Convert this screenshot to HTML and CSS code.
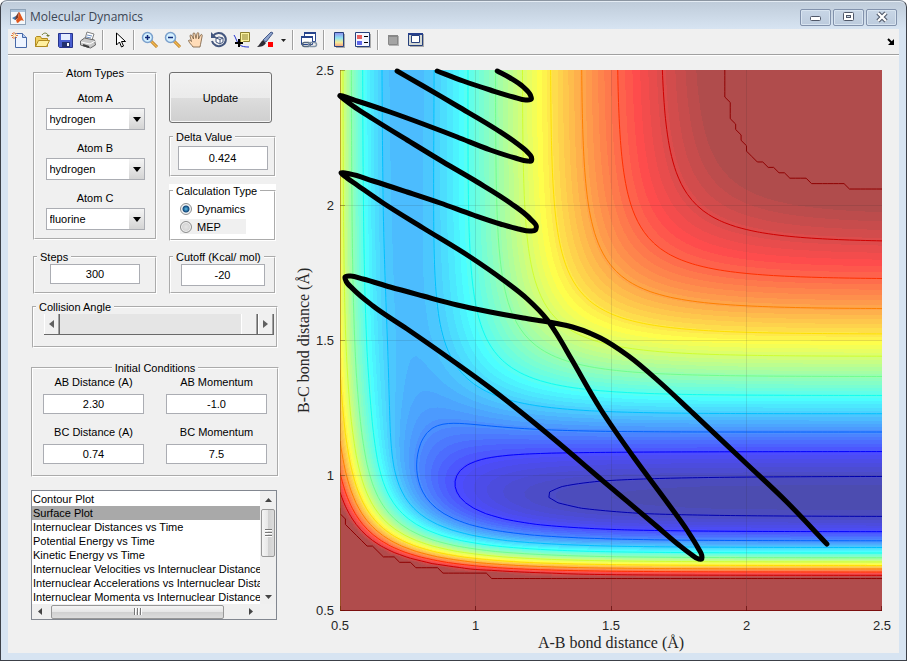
FILE: index.html
```
<!DOCTYPE html>
<html lang="en">
<head>
  <meta charset="UTF-8">
  <meta name="viewport" content="width=device-width, initial-scale=1.0">
  <title>Molecular Dynamics</title>
  <link rel="stylesheet" href="styles.css">
</head>
<body>
  <div class="window">
    <!-- Title bar -->
    <header class="titlebar">
      <svg class="logo" width="16" height="16" viewBox="0 0 16 16">
        <rect x=".5" y=".5" width="15" height="15" fill="#f4f7fa" stroke="#8fa3b8"/>
        <path d="M1 1h14v2H1z" fill="#a9c3dd"/>
        <path d="M2 9l4-2 2 2-3 2z" fill="#3c78b4"/>
        <path d="M6 7c1-1 2-4 3-4l-1 6-3 2z" fill="#7a3a2a"/>
        <path d="M9 3c1 0 3 6 5 9-2-1-3-1-4 0s-2 2-3 2l-1-3 2-2z" fill="#e0561c"/>
      </svg>
      <h1>Molecular Dynamics</h1>
      <div class="window-buttons">
        <button type="button" aria-label="Minimize">
          <svg width="14" height="12" viewBox="0 0 14 12"><rect x="1.500" y="5.500" width="10" height="4" rx="1" fill="#fff" stroke="#4f5768"/></svg>
        </button>
        <button type="button" aria-label="Maximize">
          <svg width="14" height="12" viewBox="0 0 14 12"><rect x="1.500" y="1.500" width="10" height="8" rx="1" fill="#fff" stroke="#4f5768"/><rect x="4.500" y="4.500" width="4" height="2" fill="#c8d5e4" stroke="#4f5768"/></svg>
        </button>
        <button type="button" aria-label="Close">
          <svg width="14" height="12" viewBox="0 0 14 12"><path d="M3 2l8 8M11 2l-8 8" stroke="#4f5768" stroke-width="4.500"/><path d="M3 2l8 8M11 2l-8 8" stroke="#fff" stroke-width="2.300"/></svg>
        </button>
      </div>
    </header>

    <div class="content">
      <!-- Figure toolbar -->
      <nav class="toolbar">
        <button type="button" aria-label="New">
          <svg viewBox="0 0 18 18"><path d="M5.500 2.500h7l4 4v10h-11z" fill="#eef4ff" stroke="#4668a8"/><path d="M12.500 2.500v4h4" fill="#b8cdf0" stroke="#4668a8"/><path d="M4 1v7M1 4.500h7M2 2l5 5M7 2L2 7" stroke="#e07840"/><circle cx="4.500" cy="4.500" r="1.500" fill="#fff3c0"/></svg>
        </button>
        <button type="button" aria-label="Open">
          <svg viewBox="0 0 18 18"><path d="M2.500 15.500v-9l1-1h4l1 2h6v8z" fill="#f0d060" stroke="#b08a20"/><path d="M2.500 15.500l3-6h11l-3 6z" fill="#fff0a0" stroke="#b08a20"/><path d="M9 4c2-3 5-2 6 0" fill="none" stroke="#6f7b35"/><path d="M13 4h4l-2 2z" fill="#6f7b35"/></svg>
        </button>
        <button type="button" aria-label="Save">
          <svg viewBox="0 0 18 18"><path d="M2.500 2.500h14v14h-13l-1-1z" fill="#4a5fd0" stroke="#27348c"/><path d="M5 3h9v6H5z" fill="#e4ecff"/><path d="M6 11h8v5H6z" fill="#22306e"/><path d="M11 12h2v3h-2z" fill="#fff"/></svg>
        </button>
        <button type="button" aria-label="Print">
          <svg viewBox="0 0 18 18"><path d="M6 8l2-7 7 2-2 6z" fill="#fff" stroke="#808080"/><path d="M8 4l5 1M7 6l5 1" stroke="#7090c0"/><path d="M1.500 10l4-3 10 2 1 5-5 3-10-3z" fill="#c8c8c8" stroke="#686868"/><path d="M2 11l9 2 5-3" fill="none" stroke="#fff"/><path d="M4 14l6 2" stroke="#404040" stroke-width="2"/></svg>
        </button>
        <span class="sep"></span>
        <button type="button" aria-label="Edit plot">
          <svg viewBox="0 0 18 18"><path d="M6.500 2v12l3-3 2 5 2-1-2-4.500h4z" fill="#fff" stroke="#000"/></svg>
        </button>
        <span class="sep"></span>
        <button type="button" aria-label="Zoom in">
          <svg viewBox="0 0 18 18"><path d="M10 10l6 6" stroke="#b87820" stroke-width="3"/><path d="M10 10l6 6" stroke="#f0b850" stroke-width="1.500"/><circle cx="6.500" cy="6.500" r="5" fill="#d4f0ff" stroke="#7ba0cc" stroke-width="1.500"/><path d="M6.500 4v5M4 6.500h5" stroke="#102878" stroke-width="1.500"/></svg>
        </button>
        <button type="button" aria-label="Zoom out">
          <svg viewBox="0 0 18 18"><path d="M10 10l6 6" stroke="#b87820" stroke-width="3"/><path d="M10 10l6 6" stroke="#f0b850" stroke-width="1.500"/><circle cx="6.500" cy="6.500" r="5" fill="#d4f0ff" stroke="#7ba0cc" stroke-width="1.500"/><path d="M4 6.500h5" stroke="#102878" stroke-width="1.500"/></svg>
        </button>
        <button type="button" aria-label="Pan">
          <svg viewBox="0 0 18 18"><path d="M6 16c-1-2-4-4-4.500-6.500 1-1 2 0 3 1L3 5c0-1.500 1.500-1.500 2 0l1.500 3L6 3c0-1.500 1.800-1.500 2 0l1 4.500L10 2.500c.3-1.400 2-1 1.800.3L11.500 8l2-4c.7-1.200 2-.4 1.700.8L14 11c0 2-1 3-1 5z" fill="#ffdcb8" stroke="#74593c" stroke-width=".8"/></svg>
        </button>
        <button type="button" aria-label="Rotate 3D">
          <svg viewBox="0 0 18 18"><path d="M3 5a7 6.500 0 1 1-1 5" fill="none" stroke="#43567e" stroke-width="2"/><path d="M1 1v6h6z" fill="#43567e"/><path d="M6 7l3-1 4 1v4l-3 2-4-2zM6 7l4 1.500L13 7M10 8.500V13" fill="#fff" stroke="#43567e"/></svg>
        </button>
        <button type="button" aria-label="Data cursor">
          <svg viewBox="0 0 18 18"><path d="M1 4c2 3 2 5 4 8s5 4 11 4" fill="none" stroke="#2030d0"/><path d="M7.500 1.500h9v9h-6l-3 3z" fill="#fbf3a0" stroke="#8c8030"/><path d="M9 4h6M9 6h6M9 8h6" stroke="#8c8030"/><path d="M6 8v8M2 12h8" stroke="#000" stroke-width="2"/></svg>
        </button>
        <button type="button" aria-label="Brush">
          <svg viewBox="0 0 18 18"><path d="M7 9l8-8 2 1-7 9z" fill="#8ea4cc" stroke="#465a8a"/><path d="M7 9l3 3c-2 3-5 4-9 4 3-2 3-5 6-7z" fill="#2c2c34"/><path d="M12 11h5v5h-5z" fill="#f00"/></svg>
        </button>
        <button type="button" class="narrow" aria-label="Brush colour">
          <svg viewBox="0 0 8 18"><path d="M2 8h5L4.500 11z" fill="#222"/></svg>
        </button>
        <span class="sep"></span>
        <button type="button" aria-label="Link plot">
          <svg viewBox="0 0 18 18"><path d="M4.500 1.500h11v9h-11z" fill="#fff" stroke="#27448c"/><path d="M4 1h12v2H4z" fill="#27448c"/><path d="M1.500 5.500h11v8h-11z" fill="#fff" stroke="#27448c"/><path d="M1 5h12v2H1z" fill="#27448c"/><rect x="2.500" y="11.500" width="8" height="4" rx="2" fill="none" stroke="#55687c" stroke-width="1.500"/><rect x="8.500" y="11.500" width="8" height="4" rx="2" fill="none" stroke="#8294a8" stroke-width="1.500"/></svg>
        </button>
        <span class="sep"></span>
        <button type="button" aria-label="Insert colorbar">
          <svg viewBox="0 0 18 18"><defs><linearGradient id="bar" x2="0" y2="1"><stop offset="0" stop-color="#8c8cf0"/><stop offset=".4" stop-color="#90e4f0"/><stop offset=".7" stop-color="#f4ec98"/><stop offset="1" stop-color="#f49c84"/></linearGradient></defs><path d="M5 3h9v14H5z" fill="#aaa"/><path d="M3.500 1.500h9v14h-9z" fill="url(#bar)" stroke="#27407c"/></svg>
        </button>
        <button type="button" aria-label="Insert legend">
          <svg viewBox="0 0 18 18"><path d="M3 3h14v14H3z" fill="#aaa"/><path d="M1.500 1.500h14v14h-14z" fill="#f4f6ff" stroke="#27407c"/><path d="M3 4h5v4H3z" fill="#e86060"/><path d="M3 10h5v4H3z" fill="#6068e8"/><path d="M10 5.500h4M10 11.500h4" stroke="#000"/></svg>
        </button>
        <span class="sep"></span>
        <button type="button" aria-label="Hide plot tools">
          <svg viewBox="0 0 18 18"><path d="M4 5h10v10H4z" fill="#b4b4b4"/><path d="M3.500 4.500h9v9h-9z" fill="#a4a4a4" stroke="#888"/><path d="M3 4h10v2H3z" fill="#888"/></svg>
        </button>
        <button type="button" aria-label="Show plot tools">
          <svg viewBox="0 0 18 18"><path d="M2 3h14v13H2z" fill="#aaa"/><path d="M.5 2.500h14v12H.5z" fill="#d4d8d4" stroke="#27407c"/><path d="M0 2h15v2H0z" fill="#27408c"/><path d="M3.500 4.500h8v7h-8z" fill="#fff" stroke="#27407c"/></svg>
        </button>
        <button type="button" class="dock narrow" aria-label="Dock figure">
          <svg viewBox="0 0 8 18"><path d="M1 8l4 4" stroke="#000" stroke-width="2"/><path d="M7 8v6H1z" fill="#000"/></svg>
        </button>
      </nav>

      <main class="main">
        <form class="controls">
          <div class="columns">
            <div class="column left">
              <fieldset class="atoms">
                <legend>Atom Types</legend>
                <label for="atomA">Atom A</label>
                <div class="dropdown">
                  <select id="atomA"><option>hydrogen</option><option>fluorine</option></select>
                </div>
                <label for="atomB">Atom B</label>
                <div class="dropdown">
                  <select id="atomB"><option>hydrogen</option><option>fluorine</option></select>
                </div>
                <label for="atomC">Atom C</label>
                <div class="dropdown">
                  <select id="atomC"><option>fluorine</option><option>hydrogen</option></select>
                </div>
              </fieldset>
              <fieldset class="single">
                <legend><label for="steps">Steps</label></legend>
                <input type="text" id="steps" value="300">
              </fieldset>
            </div>
            <div class="column right">
              <button type="button" class="update">Update</button>
              <fieldset class="single delta">
                <legend><label for="delta">Delta Value</label></legend>
                <input type="text" id="delta" value="0.424">
              </fieldset>
              <div class="calc">
                <fieldset>
                  <legend>Calculation Type</legend>
                  <label><input type="radio" name="calc" checked>Dynamics</label>
                  <label class="grey"><input type="radio" name="calc">MEP</label>
                </fieldset>
              </div>
              <fieldset class="single cutoff">
                <legend><label for="cutoff">Cutoff (Kcal/ mol)</label></legend>
                <input type="text" id="cutoff" value="-20">
              </fieldset>
            </div>
          </div>

          <fieldset class="angle">
            <legend><label for="angle">Collision Angle</label></legend>
            <div class="slider">
              <button type="button" aria-label="Decrease angle"><svg width="5" height="8" viewBox="0 0 5 8"><path d="M5 0v8L0 4z" fill="#606060"/></svg></button>
              <input type="range" id="angle" min="0" max="180" value="180">
              <button type="button" aria-label="Increase angle"><svg width="5" height="8" viewBox="0 0 5 8"><path d="M0 0v8l5-4z" fill="#606060"/></svg></button>
            </div>
          </fieldset>

          <fieldset class="initial">
            <legend>Initial Conditions</legend>
            <div class="fields">
              <label>AB Distance (A)<input type="text" value="2.30"></label>
              <label>AB Momentum<input type="text" value="-1.0"></label>
              <label>BC Distance (A)<input type="text" value="0.74"></label>
              <label>BC Momentum<input type="text" value="7.5"></label>
            </div>
          </fieldset>

          <div class="plot-list">
            <select size="8" aria-label="Plot type">
              <option>Contour Plot</option>
              <option selected>Surface Plot</option>
              <option>Internuclear Distances vs Time</option>
              <option>Potential Energy vs Time</option>
              <option>Kinetic Energy vs Time</option>
              <option>Internuclear Velocities vs Internuclear Distance</option>
              <option>Internuclear Accelerations vs Internuclear Distance</option>
              <option>Internuclear Momenta vs Internuclear Distance</option>
            </select>
            <div class="vbar">
              <svg width="7" height="4" viewBox="0 0 7 4"><path d="M0 4h7L3.500 0z" fill="#444"/></svg>
              <div class="thumb"><i></i><i></i><i></i></div>
              <svg class="end" width="7" height="4" viewBox="0 0 7 4"><path d="M0 0h7L3.500 4z" fill="#444"/></svg>
            </div>
            <div class="hbar">
              <svg width="4" height="7" viewBox="0 0 4 7"><path d="M4 0v7L0 3.500z" fill="#444"/></svg>
              <div class="thumb"><i></i><i></i><i></i></div>
              <svg class="end" width="4" height="7" viewBox="0 0 4 7"><path d="M0 0v7l4-3.500z" fill="#444"/></svg>
            </div>
          </div>
        </form>

        <!-- Potential energy surface -->
        <section class="figure">
          <div class="y-label">B-C bond distance (Å)</div>
          <div class="y-ticks"><span>2.5</span><span>2</span><span>1.5</span><span>1</span><span>0.5</span></div>
          <div class="plot">
            <canvas id="surface"></canvas>
            <svg class="trajectory" viewBox="0 0 541 541" preserveAspectRatio="none">
              <path id="path1"/>
              <path id="path2"/>
            </svg>
          </div>
          <div class="x-ticks"><span>0.5</span><span>1</span><span>1.5</span><span>2</span><span>2.5</span></div>
          <div class="x-label">A-B bond distance (Å)</div>
        </section>
      </main>
    </div>
  </div>

  <script src="surface.js"></script>
</body>
</html>
```
FILE: styles.css
```
* {
  box-sizing: border-box;
}

body {
  margin: 0;
  height: 100vh;
  background-color: #fff;
  font-family: "Liberation Sans", Arial, sans-serif;
  font-size: 11px;
  line-height: 14px;
  color: #000;
}

button, input, select {
  font: inherit;
  color: inherit;
  margin: 0;
  border-radius: 0;
}

svg {
  display: block;
}

.window {
  display: flex;
  flex-direction: column;
  min-height: 100vh;
  padding: 0 7px 7px;
  border: 1px solid #3c4048;
  border-top-color: #8c96a2;
  border-radius: 7px 7px 0 0;
  background: #d7e4f2 linear-gradient(#becbd9, #d7e4f2) no-repeat 0 0 / 100% 28px;
  box-shadow: inset 0 1px 0 #e4ecf4;
}

.titlebar {
  display: flex;
  align-items: center;
  height: 28px;
  padding: 4px 0 0 2px;
}

.titlebar h1 {
  margin: 0 auto 0 4px;
  font-family: "Open Sans", sans-serif;
  font-size: 12px;
  font-weight: normal;
  color: #3c4654;
}

.window-buttons {
  display: flex;
  gap: 2px;
  padding-right: 2px;
}

.window-buttons button {
  display: flex;
  align-items: center;
  justify-content: center;
  width: 31px;
  height: 17px;
  padding: 0;
  border: 1px solid #8292ac;
  border-radius: 2px;
  background: linear-gradient(#c8d6e6, #bccbdd);
  box-shadow: inset 0 0 0 1px #d8e4f0;
}

.content {
  flex: 1;
  display: flex;
  flex-direction: column;
  background-color: #f0f0f0;
}

/* Toolbar */
.toolbar {
  display: flex;
  align-items: center;
  gap: 5px;
  height: 26px;
  padding: 0 4px 3px 2px;
  border-bottom: 1px solid #a0a0a0;
  box-shadow: 0 1px 0 #fff;
}

.toolbar button {
  width: 18px;
  height: 18px;
  padding: 0;
  border: 0;
  background: none;
}

.toolbar .narrow {
  width: 8px;
}

.toolbar .dock {
  margin-left: auto;
}

.sep {
  width: 2px;
  height: 20px;
  margin-right: 1px;
  border-left: 1px solid #a0a0a0;
  background-color: #fff;
}

.main {
  flex: 1;
  display: flex;
  gap: 16px;
  padding: 11px 17px 0 23px;
}

/* Left side controls */
.controls {
  flex: 0 0 248px;
}

.columns {
  display: flex;
  gap: 12px;
  padding: 0 2px;
}

.column {
  display: flex;
  flex-direction: column;
}

.left {
  width: 124px;
  gap: 10px;
}

.right {
  width: 107px;
  gap: 7px;
  padding-top: 6px;
}

fieldset {
  min-width: 0;
  margin: 0;
  padding: 0;
  border: 2px groove #fff;
}

legend {
  margin-left: 2px;
  padding: 0 3px;
  height: 14px;
}

.atoms {
  display: flex;
  flex-direction: column;
  align-items: center;
  height: 174px;
}

.atoms legend, .initial legend {
  margin: 0 auto;
}

.atoms label {
  margin-top: 11px;
}

.atoms .dropdown {
  margin-top: 3px;
}

.dropdown {
  position: relative;
  width: 99px;
  height: 22px;
}

.dropdown select {
  appearance: none;
  width: 100%;
  height: 22px;
  padding: 0 3px;
  border: 1px solid #abadb3;
  background: #fff linear-gradient(#f4f4f4, #d4d4d4) no-repeat right 0 top 0 / 15px 100%;
}

/* Arrow on the drop-down button */
.dropdown::after {
  content: "";
  position: absolute;
  right: 4px;
  top: 9px;
  border: 4px solid transparent;
  border-top: 5px solid #000;
  border-bottom: 0;
  pointer-events: none;
}

input[type="text"] {
  display: block;
  border: 1px solid #abadb3;
  padding: 0;
  background-color: #fff;
  text-align: center;
}

.single {
  height: 44px;
}

.single input {
  width: 90px;
  height: 20px;
  margin: 0 auto;
}

.delta {
  height: 47px;
}

.delta input {
  height: 24px;
  margin-top: 2px;
}

.cutoff {
  margin-top: 2px;
}

.cutoff input {
  width: 84px;
  height: 22px;
}

.update {
  width: 103px;
  height: 51px;
  border: 1px solid #707070;
  border-radius: 3px;
  background: linear-gradient(#f2f2f2 0%, #ebebeb 50%, #dddddd 50%, #cfcfcf 100%);
  box-shadow: inset 0 0 0 1px #f6f6f6;
}

.calc {
  height: 57px;
  background-color: #fff;
}

.calc fieldset {
  height: 57px;
}

.calc label {
  display: flex;
  align-items: center;
  gap: 5px;
  width: 66px;
  height: 15px;
  margin: 3px 0 0 9px;
}

.calc .grey {
  background-color: #f0f0f0;
}

.calc input {
  appearance: none;
  flex: none;
  width: 12px;
  height: 12px;
  border: 1px solid #8e8f8f;
  border-radius: 50%;
  background: radial-gradient(#e4e4e4, #c8c8c8);
  box-shadow: inset 0 0 0 1px #f4f4f4;
}

.calc input:checked {
  background: radial-gradient(circle, #5cc0ec 0, #12477a 3px, #e8eef2 4px);
}

.angle {
  width: 246px;
  height: 48px;
  margin: 6px 0 0 1px;
}

.slider {
  display: flex;
  width: 230px;
  height: 21px;
  margin-left: 10px;
  border-bottom: 1px solid #696969;
}

.slider button {
  display: flex;
  align-items: center;
  justify-content: center;
  width: 16px;
  padding: 0;
  border: 0;
  border-right: 1px solid #696969;
  background-color: #f0f0f0;
  box-shadow: inset 1px 0 #fff, inset -1px 0 #a0a0a0;
}

.slider input {
  appearance: none;
  flex: 1;
  min-width: 0;
  height: 20px;
  background-color: #e5e5e5;
}

.slider input::-webkit-slider-thumb {
  appearance: none;
  width: 17px;
  height: 20px;
  border-right: 1px solid #696969;
  background-color: #f0f0f0;
  box-shadow: inset 1px 0 #fff, inset -1px 0 #a0a0a0;
}

.initial {
  height: 116px;
  margin-top: 13px;
}

.fields {
  display: grid;
  grid-template-columns: 101px 101px;
  justify-content: center;
  gap: 11px 22px;
}

.fields label {
  text-align: center;
}

.fields input {
  width: 100%;
  height: 20px;
  margin-top: 5px;
}

/* List of plots with its scroll bars */
.plot-list {
  display: grid;
  grid-template-columns: 1fr 16px;
  grid-template-rows: 113px 15px;
  width: 246px;
  margin-top: 13px;
  border: 1px solid #828790;
  background-color: #f0f0f0;
}

.plot-list select {
  width: 100%;
  height: 113px;
  min-width: 0;
  padding: 1px 0 0;
  border: 0;
  outline: 0;
  overflow: hidden;
  background-color: #fff;
}

.plot-list option {
  min-height: 14px;
  height: 14px;
  padding: 1px 1px 0;
  line-height: 14px;
  color: #000;
}

.plot-list option:checked {
  background: #a9a9a9 linear-gradient(#a9a9a9, #a9a9a9);
}

.vbar, .hbar {
  display: flex;
  align-items: center;
  background-color: #efefef;
}

.vbar {
  flex-direction: column;
  padding: 7px 0 5px;
}

.hbar {
  padding: 0 7px 0 6px;
}

.thumb {
  display: flex;
  align-items: center;
  justify-content: center;
  gap: 1px;
  border: 1px solid #979797;
  border-radius: 2px;
}

.thumb i {
  border: 1px solid #777;
}

.vbar .thumb {
  flex-direction: column;
  width: 14px;
  height: 48px;
  margin-top: 7px;
  background: linear-gradient(90deg, #f5f5f5, #e6e6e6 50%, #d0d0d0 50%, #dcdcdc);
}

.vbar i {
  width: 7px;
  border-width: 1px 0;
  border-bottom-color: #fff;
}

.hbar .thumb {
  width: 173px;
  height: 14px;
  margin-left: 9px;
  background: linear-gradient(#f5f5f5, #e6e6e6 50%, #d0d0d0 50%, #dcdcdc);
}

.hbar i {
  height: 7px;
  border-width: 0 1px;
  border-right-color: #fff;
}

.vbar .end {
  margin-top: auto;
}

.hbar .end {
  margin-left: auto;
}

/* Axes */
.figure {
  flex: 1;
  min-width: 0;
  display: grid;
  grid-template-columns: 18px 21px 1fr;
  grid-template-rows: 1fr 23px 19px;
  column-gap: 3px;
  padding-top: 4px;
  color: #262626;
}

.y-label, .x-label {
  font-family: "Liberation Serif", serif;
  font-size: 16px;
  line-height: 18px;
  text-align: center;
  white-space: nowrap;
}

.y-label {
  writing-mode: vertical-rl;
  transform: rotate(180deg);
}

.y-ticks, .x-ticks {
  display: flex;
  justify-content: space-between;
  font-size: 13px;
}

.y-ticks {
  flex-direction: column;
  align-items: flex-end;
  padding: 1px 3px 0 0;
}

.y-ticks span {
  display: flex;
  align-items: center;
  height: 0;
}

.x-ticks, .x-label {
  grid-column: 3;
}

.x-ticks {
  padding-top: 8px;
}

.x-ticks span {
  display: flex;
  justify-content: center;
  width: 0;
}

.plot {
  position: relative;
  min-height: 0;
}

.plot canvas, .trajectory {
  position: absolute;
  left: 0;
  top: 0;
  width: 100%;
  height: 100%;
}

.trajectory {
  overflow: visible;
}

.trajectory path {
  fill: none;
  stroke: #000;
  stroke-width: 5;
  stroke-linecap: round;
  stroke-linejoin: round;
}
```
FILE: surface.js
```
// LEPS potential for the collinear A-B-C system, energies in kcal/mol
const HH = { D: 109.5, beta: 1.942, r0: 0.7417, sato: 0.188 };
const HF = { D: 140.8, beta: 2.2187, r0: 0.917, sato: 0.167 };
const CUTOFF = -22.4;
const VMIN = -141;
const N = 100;  // grid cells per axis, 0.02 A each

function integrals(p, r) {
  const e = Math.exp(-p.beta * (r - p.r0));
  const singlet = p.D * (e * e - 2 * e);
  const triplet = p.D / 2 * (e * e + 2 * e) * (1 - p.sato) / (1 + p.sato);
  return { Q: (singlet + triplet) / 2, J: (singlet - triplet) / 2 };
}

function potential(ab, bc) {
  const a = integrals(HH, ab);
  const b = integrals(HF, bc);
  const c = integrals(HF, ab + bc);
  const s = (a.J - b.J) ** 2 + (b.J - c.J) ** 2 + (c.J - a.J) ** 2;
  return Math.min(CUTOFF, a.Q + b.Q + c.Q - Math.sqrt(s / 2));
}

// Jet colormap with 64 entries
function jet(v) {
  const i = Math.max(0, Math.min(62, Math.floor((v - VMIN) / (CUTOFF - VMIN) * 64)));
  const f = (i + 1) / 64;
  const ramp = c => Math.max(0, Math.min(1, 1.5 - Math.abs(4 * f - c)));
  return [ramp(3) * 255, ramp(2) * 255, ramp(1) * 255];
}

function drawSurface() {
  const canvas = document.getElementById("surface");
  const w = canvas.width = canvas.clientWidth;
  const h = canvas.height = canvas.clientHeight;
  const ctx = canvas.getContext("2d");

  const grid = [];
  for (let j = 0; j <= N; j++) {
    grid.push([]);
    for (let i = 0; i <= N; i++) {
      grid[j].push(potential(0.5 + 2 * i / N, 0.5 + 2 * j / N));
    }
  }

  // Filled surface, 70% opaque over white
  const image = ctx.createImageData(w, h);
  for (let y = 0; y < h; y++) {
    for (let x = 0; x < w; x++) {
      const gx = (x + 0.5) / w * N, gy = (h - y - 0.5) / h * N;
      const i = Math.floor(gx), j = Math.floor(gy);
      const u = gx - i, t = gy - j;
      const v = (grid[j][i] * (1 - u) + grid[j][i + 1] * u) * (1 - t) +
                (grid[j + 1][i] * (1 - u) + grid[j + 1][i + 1] * u) * t;
      const rgb = jet(v);
      const k = (y * w + x) * 4;
      for (let c = 0; c < 3; c++) image.data[k + c] = 76 + 0.7 * rgb[c];
      image.data[k + 3] = 255;
    }
  }
  ctx.putImageData(image, 0, 0);

  // Contour lines
  for (let k = 0; k < 12; k++) {
    const level = k === 0 ? CUTOFF : -21.9 - 10.46 * k;
    ctx.strokeStyle = `rgb(${jet(level).join(",")})`;
    ctx.beginPath();
    for (let j = 0; j < N; j++) {
      for (let i = 0; i < N; i++) {
        const corners = [[i, j], [i + 1, j], [i + 1, j + 1], [i, j + 1]];
        const points = [];
        for (let e = 0; e < 4; e++) {
          const p = corners[e], q = corners[(e + 1) % 4];
          const a = grid[p[1]][p[0]], b = grid[q[1]][q[0]];
          if ((a >= level) !== (b >= level)) {
            const t = (level - a) / (b - a);
            points.push([(p[0] + (q[0] - p[0]) * t) / N * w, h - (p[1] + (q[1] - p[1]) * t) / N * h]);
          }
        }
        for (let e = 0; e + 1 < points.length; e += 2) {
          ctx.moveTo(points[e][0], points[e][1]);
          ctx.lineTo(points[e + 1][0], points[e + 1][1]);
        }
      }
    }
    ctx.stroke();
  }

  // Grid lines, ticks and axis box
  for (let k = 0; k <= 4; k++) {
    const x = Math.round(k * (w - 1) / 4), y = Math.round(k * (h - 1) / 4);
    if (k > 0 && k < 4) {
      ctx.fillStyle = "rgba(38, 38, 38, 0.12)";
      ctx.fillRect(x, 0, 1, h);
      ctx.fillRect(0, y, w, 1);
    }
    ctx.fillStyle = "rgba(90, 0, 0, 0.6)";
    ctx.fillRect(x, h - 5, 1, 5);
    ctx.fillStyle = "rgba(90, 60, 0, 0.4)";
    ctx.fillRect(0, y, 5, 1);
  }
  ctx.fillStyle = "rgba(110, 0, 0, 0.8)";
  ctx.fillRect(0, h - 1, w, 1);
  ctx.fillStyle = "rgba(130, 80, 0, 0.5)";
  ctx.fillRect(0, 0, 1, h);
}

// Trajectory points in plot units, 541 by 541
const run1 = [
  [486, 474], [446, 432], [406, 394], [350, 341], [320, 313], [288, 286], [260, 268],
  [232, 257], [208, 252], [183, 248], [150, 242], [117, 235], [83, 226], [50, 217],
  [23, 209], [10, 206], [5, 207], [6, 211], [13, 219], [33, 236], [67, 259], [110, 289], [150, 318],
  [183, 344], [217, 372], [259, 408], [317, 457], [337, 474], [350, 484], [358, 489],
  [361, 489], [361, 485], [358, 479], [347, 461], [327, 433], [293, 387], [260, 339], [231, 289],
  [217, 265], [207, 250], [187, 229], [163, 210], [130, 187], [83, 158], [43, 133], [17, 115],
  [7, 108], [1, 103], [10, 104], [33, 111], [67, 122], [100, 133], [133, 145], [160, 154], [178, 159],
  [190, 161], [195, 160], [196, 157], [190, 149], [170, 133], [137, 112], [103, 92], [67, 70], [33, 49],
  [13, 36], [5, 30], [0, 26], [17, 31], [50, 42], [83, 54], [117, 67], [150, 80], [175, 88],
  [187, 91], [191, 91], [191, 87], [187, 82], [176, 73], [157, 60], [117, 36], [83, 16], [57, 1]
];
const run2 = [
  [97, 1], [123, 11], [150, 20], [173, 27], [186, 30], [191, 29], [190, 25], [183, 17],
  [170, 8], [157, 1]
];

// Smooth curve through the points, the shorter neighbour decides the tangent
function smooth(pts) {
  const tangents = pts.map((p, i) => {
    const a = pts[i - 1] || p, b = pts[i + 1] || p;
    const l1 = Math.hypot(p[0] - a[0], p[1] - a[1]);
    const l2 = Math.hypot(b[0] - p[0], b[1] - p[1]);
    if (!l1) return [(b[0] - p[0]) / l2, (b[1] - p[1]) / l2];
    if (!l2) return [(p[0] - a[0]) / l1, (p[1] - a[1]) / l1];
    return [0, 1].map(c => ((p[c] - a[c]) / l1 * l2 + (b[c] - p[c]) / l2 * l1) / (l1 + l2));
  });
  let d = `M${pts[0]}`;
  for (let i = 0; i < pts.length - 1; i++) {
    const p = pts[i], q = pts[i + 1], a = tangents[i], b = tangents[i + 1];
    const s = Math.hypot(q[0] - p[0], q[1] - p[1]) / 3;
    d += `C${p[0] + a[0] * s},${p[1] + a[1] * s} ${q[0] - b[0] * s},${q[1] - b[1] * s} ${q}`;
  }
  return d;
}

document.getElementById("path1").setAttribute("d", smooth(run1));
document.getElementById("path2").setAttribute("d", smooth(run2));
drawSurface();
window.addEventListener("resize", drawSurface);
```
